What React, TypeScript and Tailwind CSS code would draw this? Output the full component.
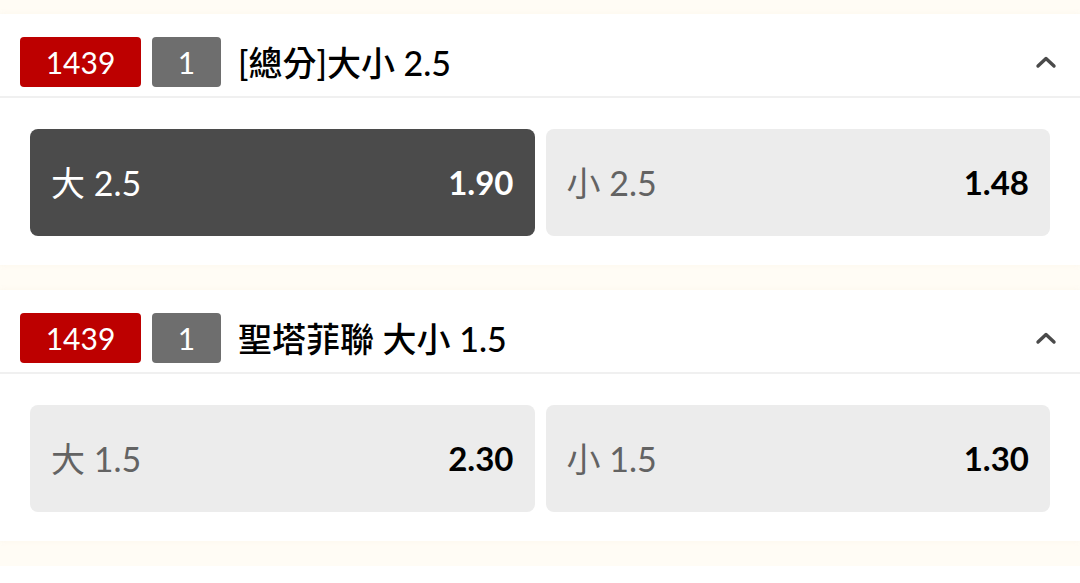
import React from 'react'

const FONT = "font-['Lato','Noto_Sans_CJK_TC',sans-serif]"

type Pick = { label: string; odds: string; active?: boolean }

function ChevronUp() {
  return (
    <svg width="24" height="24" viewBox="0 0 24 24" fill="none">
      <path d="M4 16 L12 8.5 L20 16" stroke="#4a4a4a" strokeWidth="3.4" strokeLinecap="round" strokeLinejoin="round" />
    </svg>
  )
}

function PickButton({ label, odds, active }: Pick) {
  return (
    <div
      className={
        active
          ? 'flex h-[107px] items-center justify-between rounded-[8px] bg-[#4b4b4b] px-[21px]'
          : 'flex h-[107px] items-center justify-between rounded-[8px] bg-[#ececec] px-[21px]'
      }
    >
      <span className={active ? 'text-[34px] text-white' : 'text-[34px] text-[#636363]'}>{label}</span>
      <span className={active ? 'text-[33px] font-bold text-white' : 'text-[33px] font-bold text-black'}>
        {odds}
      </span>
    </div>
  )
}

function MarketCard({ title, picks }: { title: string; picks: Pick[] }) {
  return (
    <section className="bg-white shadow-[0_0_6px_rgba(200,180,140,0.08)]">
      <header className="flex h-[84px] items-start border-b-2 border-[#f0f0f0] pl-5 pr-[22px] pt-[23px]">
        <span className="flex h-[50px] w-[121px] items-center justify-center rounded-[4px] bg-[#bd0000] text-[30px] text-white">
          1439
        </span>
        <span className="ml-[11px] flex h-[50px] w-[69px] items-center justify-center rounded-[4px] bg-[#6e6e6e] text-[30px] text-white">
          1
        </span>
        <h2 className="ml-[17px] flex h-[50px] flex-1 items-center text-[34px] font-medium text-black">{title}</h2>
        <div className="flex h-[50px] items-center">
          <ChevronUp />
        </div>
      </header>
      <div className="grid grid-cols-2 gap-[11px] px-[30px] pb-[29px] pt-[31px]">
        {picks.map((p) => (
          <PickButton key={p.label} {...p} />
        ))}
      </div>
    </section>
  )
}

export default function App() {
  return (
    <main className={`${FONT} flex h-screen flex-col gap-[25px] overflow-hidden bg-[#fffcf5] pt-[14px]`}>
      <MarketCard
        title="[總分]大小 2.5"
        picks={[
          { label: '大 2.5', odds: '1.90', active: true },
          { label: '小 2.5', odds: '1.48' },
        ]}
      />
      <MarketCard
        title="聖塔菲聯 大小 1.5"
        picks={[
          { label: '大 1.5', odds: '2.30' },
          { label: '小 1.5', odds: '1.30' },
        ]}
      />
      <section className="min-h-[40px] flex-1 bg-white" />
    </main>
  )
}
